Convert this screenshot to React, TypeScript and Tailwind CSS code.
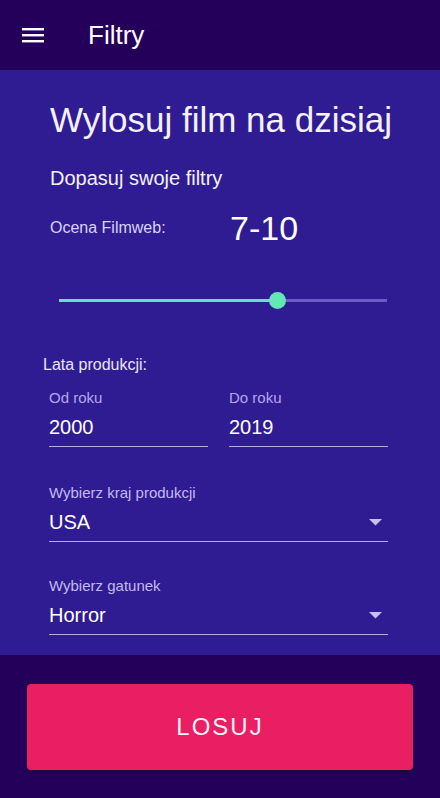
import React from 'react';

const font = { fontFamily: '"Liberation Sans", Arial, sans-serif' };

function SelectField({ label, value }: { label: string; value: string }) {
  return (
    <div className="flex flex-col">
      <span className="text-[15px] leading-[18px] text-[#c3b8f0]">{label}</span>
      <div className="mt-[8px] flex items-center justify-between border-b border-[#b7abe8] pb-[7px]">
        <span className="text-[20px] leading-[24px] text-white">{value}</span>
        <svg width="13" height="7" viewBox="0 0 13 7" className="mr-[6px]">
          <path d="M0 0 L13 0 L6.5 6.5 Z" fill="#c9c0f2" />
        </svg>
      </div>
    </div>
  );
}

function YearField({ label, value }: { label: string; value: string }) {
  return (
    <div className="flex flex-1 flex-col">
      <span className="text-[15px] leading-[18px] text-[#b7a6f0]">{label}</span>
      <span className="mt-[8px] border-b border-[#b7abe8] pb-[7px] text-[20px] leading-[24px] text-white">
        {value}
      </span>
    </div>
  );
}

export default function App() {
  return (
    <div className="flex h-[798px] w-[440px] flex-col bg-[#25005a] text-white" style={font}>
      <header className="flex h-[70px] shrink-0 items-center bg-[#25005a] shadow-[0_2px_4px_rgba(0,0,0,0.3)]">
        <svg width="22" height="16" viewBox="0 0 22 16" className="ml-[22px]">
          <rect x="0" y="1" width="22" height="2.4" fill="#fff" />
          <rect x="0" y="7" width="22" height="2.4" fill="#fff" />
          <rect x="0" y="13" width="22" height="2.4" fill="#fff" />
        </svg>
        <span className="ml-[44px] text-[26px] leading-none">Filtry</span>
      </header>

      <main className="flex h-[585px] flex-col bg-[#301c92] pt-[30px]">
        <h1 className="pl-[50px] text-[35px] leading-[40px] text-[#f4f1fb]">Wylosuj film na dzisiaj</h1>
        <h2 className="mt-[27px] pl-[50px] text-[20px] leading-[22px] text-[#f4f1fb]">Dopasuj swoje filtry</h2>

        <div className="mt-[20px] flex h-[38px] items-center pl-[50px]">
          <span className="w-[180px] text-[16px] leading-[18px] text-[#d9d3f3]">Ocena Filmweb:</span>
          <span className="text-[34px] leading-[38px] text-white">7-10</span>
        </div>

        <div className="relative ml-[59px] mr-[53px] mt-[44px] h-[18px]">
          <div className="absolute left-0 right-0 top-[8px] h-[3px] bg-[#6c5cc6]" />
          <div className="absolute left-0 top-[8px] h-[3px] w-[218px] bg-[#5de3cc]" />
          <div className="absolute left-[210px] top-[1px] h-[17px] w-[17px] rounded-full bg-[#63e8b4]" />
        </div>

        <span className="mt-[47px] pl-[43px] text-[16px] leading-[18px] text-[#e8e4f7]">Lata produkcji:</span>

        <div className="mt-[15px] flex gap-[21px] pl-[49px] pr-[52px]">
          <YearField label="Od roku" value="2000" />
          <YearField label="Do roku" value="2019" />
        </div>

        <div className="mt-[37px] flex flex-col gap-[35px] pl-[49px] pr-[52px]">
          <SelectField label="Wybierz kraj produkcji" value="USA" />
          <SelectField label="Wybierz gatunek" value="Horror" />
        </div>
      </main>

      <div className="flex flex-1 items-start px-[27px] pt-[29px]">
        <button className="flex h-[86px] w-full items-center justify-center rounded-[4px] bg-[#e91e63] text-[24px] tracking-[2px] text-[#fdf2f6] shadow-[0_2px_4px_rgba(0,0,0,0.35)]">
          LOSUJ
        </button>
      </div>
    </div>
  );
}
